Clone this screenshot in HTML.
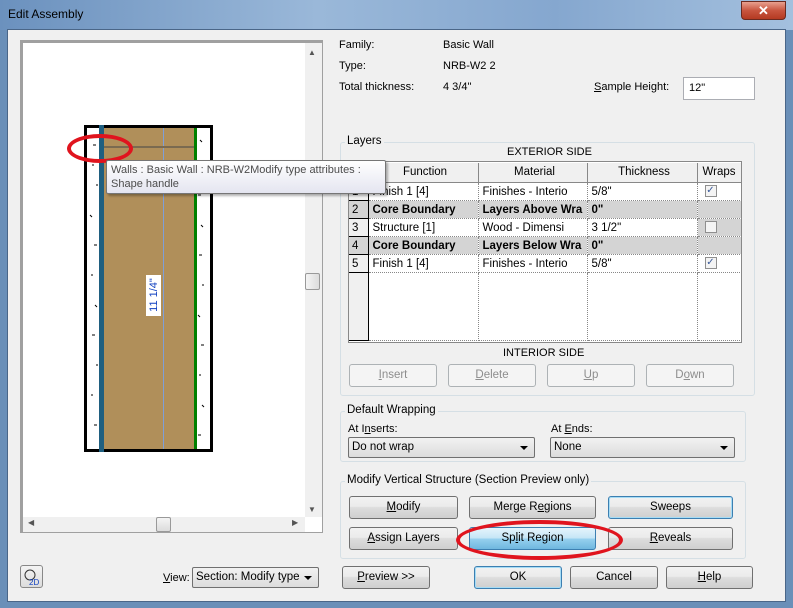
<!DOCTYPE html>
<html><head><meta charset="utf-8"><style>
*{box-sizing:border-box;margin:0;padding:0}
body{width:793px;height:608px;overflow:hidden;font-family:"Liberation Sans",sans-serif;font-size:11px;color:#000;background:#6a8fb8;position:relative}
.a{position:absolute}
.btn{position:absolute;height:23px;border:1px solid #707070;border-radius:3px;background:linear-gradient(#f2f2f2,#ebebeb 45%,#dddddd 50%,#cfcfcf);text-align:center;line-height:21px;font-size:11.5px}
.dis{color:#8d8d8d;border-color:#adb2b5;background:#f4f4f4}
.blue{border-color:#3c7fb1;box-shadow:inset 0 0 0 1px #a6dcf5}
.sel{border-color:#3c7fb1;background:linear-gradient(#e5f4fc,#c4e5f6 50%,#98d1ef 50%,#6fb7df)}
.grp{position:absolute;border:1px solid #d5dfe5;border-radius:3px}
.lg{position:absolute;background:#f0f0f0;padding:0 2px;top:-8px;left:4px;font-size:11.5px}
.dd{position:absolute;height:21px;border:1px solid #707070;border-radius:2px;background:linear-gradient(#f2f2f2,#dcdcdc);line-height:19px;padding-left:3px;font-size:11.5px}
.dd:after{content:"";position:absolute;right:6px;top:8px;border:4px solid transparent;border-top:4px solid #000;border-bottom:0}
table{border-collapse:collapse}
td{height:18px;border-right:1px dotted #888;border-bottom:1px dotted #888;padding-left:4px;font-size:11.5px;white-space:nowrap;overflow:hidden}
.g td{background:#d4d4d4;font-weight:bold}
.n{border:1px solid #000;border-left:0;padding-left:3px;width:19px;background:#f0f0f0;font-weight:normal!important}
.cb{display:inline-block;width:12px;height:12px;border:1px solid #8f8f8f;background:#f4f4f4;margin-left:3px;vertical-align:middle;font-size:10px;line-height:10px;color:#3a5a9a;text-align:center}
u{text-decoration:underline}
</style></head><body>
<div class="a" style="left:0;top:0;width:793px;height:30px;background:linear-gradient(90deg,#6b91be,#9ab8d9 40%,#85a7cf 70%,#a4c0de)"></div>
<div class="a" style="left:8px;top:7px;font-size:12px">Edit Assembly</div>
<div class="a" style="left:741px;top:1px;width:45px;height:19px;border:1px solid #6b2a20;border-radius:0 0 4px 4px;background:linear-gradient(#e8a08f,#c8553f 50%,#b43a22);color:#fff;text-align:center;font-weight:bold;font-size:13px;line-height:17px">✕</div>
<div class="a" style="left:7px;top:29px;width:779px;height:573px;background:#f0f0f0;border:1px solid #4a6688"></div>

<!-- preview -->
<div class="a" style="left:20px;top:40px;width:303px;height:493px;border:1px solid #a0a0a0;border-left:3px solid #a0a0a0;border-top:3px solid #a0a0a0;background:#fff"></div>
<div class="a" style="left:305px;top:43px;width:17px;height:474px;background:#f0f0f0"></div>
<div class="a" style="left:308px;top:48px;font-size:8px;color:#555">▲</div>
<div class="a" style="left:308px;top:505px;font-size:8px;color:#555">▼</div>
<div class="a" style="left:305px;top:273px;width:15px;height:17px;border:1px solid #999;border-radius:2px;background:linear-gradient(90deg,#f4f4f4,#dcdcdc)"></div>
<div class="a" style="left:23px;top:517px;width:282px;height:15px;background:#f0f0f0"></div>
<div class="a" style="left:28px;top:518px;font-size:8px;color:#555">◀</div>
<div class="a" style="left:292px;top:518px;font-size:8px;color:#555">▶</div>
<div class="a" style="left:156px;top:517px;width:15px;height:15px;border:1px solid #999;border-radius:2px;background:linear-gradient(#f4f4f4,#dcdcdc)"></div>

<!-- wall -->
<div class="a" style="left:84px;top:125px;width:129px;height:327px;border:3px solid #000;background:#fff"></div>
<div class="a" style="left:100px;top:128px;width:96px;height:321px;background:#b08f5a"></div>
<div class="a" style="left:99px;top:125px;width:5px;height:327px;background:#1f5f80"></div>
<div class="a" style="left:194px;top:128px;width:3px;height:321px;background:#008000"></div>
<div class="a" style="left:163px;top:128px;width:1px;height:321px;background:#7f9fd8"></div>
<div class="a" style="left:104px;top:146px;width:90px;height:2px;background:#7a6a50"></div>
<div class="a" style="left:146px;top:275px;width:15px;height:41px;background:#fff"></div>
<div class="a" style="left:133px;top:289px;transform:rotate(-90deg);color:#1040c0;font-size:11px;width:42px;text-align:center">11 1/4"</div>
<svg class="a" style="left:84px;top:125px" width="130" height="327">
<g stroke="#000" stroke-width="1">
<path d="M9 20h3M8 40h2M12 60h2M6 90l2 2M10 120h3M7 150h2M11 180l2 2M8 210h3M12 240h2M7 270h2M10 300h3M116 15l2 2M118 40h2M114 70h3M117 100l2 2M115 130h3M118 160h2M114 190l2 2M117 220h3M115 250h2M118 280l2 2M114 310h3"/>
</g></svg>
<div class="a" style="left:67px;top:134px;width:66px;height:29px;border:4px solid #e0141e;border-radius:50%"></div>

<!-- info -->
<div class="a" style="left:339px;top:39px">Family:</div>
<div class="a" style="left:443px;top:39px">Basic Wall</div>
<div class="a" style="left:339px;top:60px">Type:</div>
<div class="a" style="left:443px;top:60px">NRB-W2 2</div>
<div class="a" style="left:339px;top:81px">Total thickness:</div>
<div class="a" style="left:443px;top:81px">4 3/4"</div>
<div class="a" style="left:594px;top:81px"><u>S</u>ample Height:</div>
<div class="a" style="left:683px;top:77px;width:72px;height:23px;border:1px solid #abadb3;background:#fff;padding:4px 5px">12"</div>

<!-- layers -->
<div class="grp" style="left:340px;top:142px;width:415px;height:254px"><span class="lg">Layers</span></div>
<div class="a" style="left:507px;top:146px">EXTERIOR SIDE</div>
<div class="a" style="left:348px;top:161px;width:394px;height:182px;border:1px solid #888;background:#fff">
<table style="width:392px;table-layout:fixed">
<colgroup><col style="width:19px"><col style="width:110px"><col style="width:109px"><col style="width:110px"><col style="width:44px"></colgroup>
<tr style="background:#f0f0f0"><td class="n" style="height:20px"></td><td style="text-align:center;border-right:1px solid #888;border-bottom:1px solid #888;height:20px">Function</td><td style="text-align:center;border-right:1px solid #888;border-bottom:1px solid #888">Material</td><td style="text-align:center;border-right:1px solid #888;border-bottom:1px solid #888">Thickness</td><td style="text-align:center;border-bottom:1px solid #888;padding:0">Wraps</td></tr>
<tr><td class="n">1</td><td>Finish 1 [4]</td><td>Finishes - Interio</td><td>5/8"</td><td><span class="cb">✓</span></td></tr>
<tr class="g"><td class="n">2</td><td>Core Boundary</td><td>Layers Above Wra</td><td>0"</td><td></td></tr>
<tr><td class="n">3</td><td>Structure [1]</td><td>Wood - Dimensi</td><td>3 1/2"</td><td style="background:#d4d4d4"><span class="cb"></span></td></tr>
<tr class="g"><td class="n">4</td><td>Core Boundary</td><td>Layers Below Wra</td><td>0"</td><td></td></tr>
<tr><td class="n">5</td><td>Finish 1 [4]</td><td>Finishes - Interio</td><td>5/8"</td><td><span class="cb">✓</span></td></tr>
<tr><td class="n" style="height:68px"></td><td></td><td></td><td></td><td></td></tr>
</table></div>
<div class="a" style="left:503px;top:347px">INTERIOR SIDE</div>
<div class="btn dis" style="left:349px;top:364px;width:88px"><u>I</u>nsert</div>
<div class="btn dis" style="left:448px;top:364px;width:88px"><u>D</u>elete</div>
<div class="btn dis" style="left:547px;top:364px;width:88px"><u>U</u>p</div>
<div class="btn dis" style="left:646px;top:364px;width:88px">D<u>o</u>wn</div>

<!-- tooltip -->
<div class="a" style="z-index:5;left:106px;top:160px;width:280px;height:34px;border:1px solid #767676;border-radius:2px;background:linear-gradient(#fff,#e4e5f0);box-shadow:2px 2px 2px rgba(0,0,0,.3);padding:2px 4px;font-size:11px;line-height:14px;color:#4c4c4c;white-space:nowrap">Walls : Basic Wall : NRB-W2Modify type attributes :<br>Shape handle</div>

<div class="grp" style="left:340px;top:411px;width:406px;height:51px"><span class="lg">Default Wrapping</span></div>
<div class="a" style="left:348px;top:423px">At I<u>n</u>serts:</div>
<div class="a" style="left:551px;top:423px">At <u>E</u>nds:</div>
<div class="dd" style="left:348px;top:437px;width:187px">Do not wrap</div>
<div class="dd" style="left:550px;top:437px;width:185px">None</div>

<div class="grp" style="left:340px;top:481px;width:406px;height:78px"><span class="lg">Modify Vertical Structure (Section Preview only)</span></div>
<div class="btn" style="left:349px;top:496px;width:109px"><u>M</u>odify</div>
<div class="btn" style="left:469px;top:496px;width:127px">Merge R<u>e</u>gions</div>
<div class="btn blue" style="left:608px;top:496px;width:125px">Sweeps</div>
<div class="btn" style="left:349px;top:527px;width:109px"><u>A</u>ssign Layers</div>
<div class="btn sel" style="left:469px;top:527px;width:127px">Sp<u>l</u>it Region</div>
<div class="btn" style="left:608px;top:527px;width:125px"><u>R</u>eveals</div>
<div class="a" style="left:456px;top:520px;width:167px;height:40px;border:4px solid #e0141e;border-radius:50%"></div>

<!-- bottom -->
<div class="a" style="left:20px;top:565px;width:23px;height:23px;border:1px solid #888;border-radius:3px;background:linear-gradient(#f4f4f4,#dcdcdc)"><svg width="21" height="21"><circle cx="9" cy="9" r="5" fill="none" stroke="#333"/><text x="8" y="19" font-size="8" fill="#1040c0" font-family="Liberation Sans">2D</text></svg></div>
<div class="a" style="left:163px;top:572px"><u>V</u>iew:</div>
<div class="dd" style="left:192px;top:567px;width:127px">Section: Modify type</div>
<div class="btn" style="left:342px;top:566px;width:88px"><u>P</u>review &gt;&gt;</div>
<div class="btn blue" style="left:474px;top:566px;width:88px">OK</div>
<div class="btn" style="left:570px;top:566px;width:88px">Cancel</div>
<div class="btn" style="left:666px;top:566px;width:87px"><u>H</u>elp</div>
</body></html>
